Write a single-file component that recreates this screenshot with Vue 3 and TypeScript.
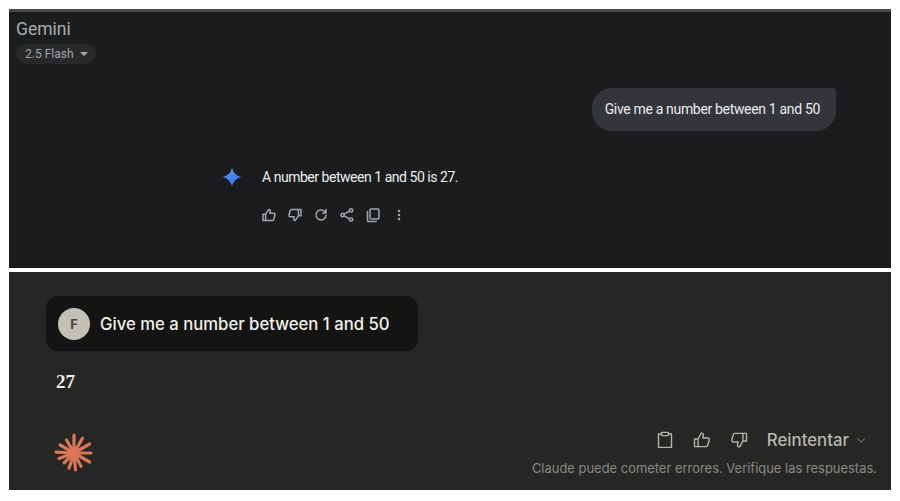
<script setup lang="ts">
const prompt = "Give me a number between 1 and 50";

// rays of the Claude mark: angle and length
const rays: { angle: number; len: number }[] = [
  { angle: 0, len: 17 },
  { angle: 30, len: 18 },
  { angle: 62, len: 15 },
  { angle: 85, len: 17 },
  { angle: 108, len: 16 },
  { angle: 135, len: 14 },
  { angle: 160, len: 16 },
  { angle: 183, len: 18 },
  { angle: 210, len: 16 },
  { angle: 240, len: 15 },
  { angle: 270, len: 18 },
  { angle: 300, len: 17 },
  { angle: 330, len: 18 },
];
</script>

<template>
  <div class="page">
    <section class="gemini">
      <header class="gem-head">
        <div class="gem-title">Gemini</div>
        <button class="model-pill">
          2.5 Flash
          <span class="caret"></span>
        </button>
      </header>

      <div class="gem-user">
        <div class="gem-bubble">{{ prompt }}</div>
      </div>

      <div class="gem-reply">
        <svg class="spark" viewBox="0 0 24 24" width="20" height="20">
          <defs>
            <linearGradient id="sparkFill" x1="0" y1="0" x2="1" y2="1">
              <stop offset="0" stop-color="#5b9cf8" />
              <stop offset="1" stop-color="#2f6fe8" />
            </linearGradient>
          </defs>
          <path
            d="M12 0.5C13.4 6.6 16.8 10.4 23.5 12C16.8 13.6 13.4 17.4 12 23.5C10.6 17.4 7.2 13.6 0.5 12C7.2 10.4 10.6 6.6 12 0.5Z"
            fill="url(#sparkFill)"
          />
        </svg>
        <div class="gem-body">
          <p class="gem-text">A number between 1 and 50 is 27.</p>
          <div class="gem-actions">
            <svg viewBox="0 0 16 16" width="16" height="16" class="ic">
              <path d="M2 7.2h2.6v6.3H2zM4.6 7.2 7.6 2.6c1.2-.3 1.9.5 1.6 1.7L8.8 6.2h4c.9 0 1.4.8 1.2 1.6l-1.2 4.7c-.2.6-.6 1-1.3 1H4.6" />
            </svg>
            <svg viewBox="0 0 16 16" width="16" height="16" class="ic">
              <path d="M14 8.8h-2.6V2.5H14zM11.4 8.8l-3 4.6c-1.2.3-1.9-.5-1.6-1.7l.4-1.9h-4c-.9 0-1.4-.8-1.2-1.6l1.2-4.7c.2-.6.6-1 1.3-1h6.9" />
            </svg>
            <svg viewBox="0 0 16 16" width="16" height="16" class="ic">
              <path d="M13 8.2A5 5 0 1 1 11.6 4.5L13 6M13 2.6V6H9.7" />
            </svg>
            <svg viewBox="0 0 16 16" width="16" height="16" class="ic">
              <circle cx="12" cy="3.4" r="1.7" />
              <circle cx="12" cy="12.6" r="1.7" />
              <circle cx="3.6" cy="8" r="1.7" />
              <path d="M5.1 7.2 10.5 4.2M5.1 8.8l5.4 3" />
            </svg>
            <svg viewBox="0 0 16 16" width="16" height="16" class="ic">
              <rect x="5" y="2" width="9" height="10" rx="1" />
              <path d="M2.5 4.5v9.2c0 .4.3.7.7.7h8" />
            </svg>
            <svg viewBox="0 0 16 16" width="16" height="16" class="ic dots">
              <circle cx="8" cy="4" r="1.3" />
              <circle cx="8" cy="8" r="1.3" />
              <circle cx="8" cy="12" r="1.3" />
            </svg>
          </div>
        </div>
      </div>
    </section>

    <section class="claude">
      <div class="cl-prompt">
        <span class="avatar">F</span>
        <span class="cl-prompt-text">{{ prompt }}</span>
      </div>

      <p class="cl-answer">27</p>

      <footer class="cl-foot">
        <svg class="burst" viewBox="-20 -20 40 40" width="40" height="40">
          <line
            v-for="ray in rays"
            :key="ray.angle"
            x1="0"
            y1="0"
            :x2="ray.len * Math.cos((ray.angle * Math.PI) / 180)"
            :y2="ray.len * Math.sin((ray.angle * Math.PI) / 180)"
          />
          <circle r="6" />
        </svg>

        <div class="cl-tools">
          <div class="cl-actions">
            <svg viewBox="0 0 18 18" width="18" height="18" class="ic2">
              <path d="M5.5 3H2.5v13.4h13V3h-3" />
              <rect x="5.5" y="1.4" width="7" height="3.2" rx=".6" />
            </svg>
            <svg viewBox="0 0 18 18" width="18" height="18" class="ic2">
              <path d="M1.5 8h3.6v7.6H1.5zM5.1 8 8.2 2.2c1.5-.4 2.5.6 2.2 2L9.8 7h4.9c1.1 0 1.8 1 1.5 2l-1.4 5.3c-.2.8-.8 1.3-1.6 1.3H5.1" />
            </svg>
            <svg viewBox="0 0 18 18" width="18" height="18" class="ic2">
              <path d="M16.5 10h-3.6V2.4h3.6zM12.9 10l-3.1 5.8c-1.5.4-2.5-.6-2.2-2l.6-2.8H3.3c-1.1 0-1.8-1-1.5-2l1.4-5.3c.2-.8.8-1.3 1.6-1.3h8.1" />
            </svg>
            <span class="retry">Reintentar</span>
            <svg viewBox="0 0 10 10" width="10" height="10" class="chev">
              <path d="M1 3.2 5 7l4-3.8" />
            </svg>
          </div>
          <div class="cl-note">Claude puede cometer errores. Verifique las respuestas.</div>
        </div>
      </footer>
    </section>
  </div>
</template>

<style>
html,
body {
  margin: 0;
  background: #fff;
}
</style>

<style scoped>
.page {
  width: 900px;
  height: 501px;
  box-sizing: border-box;
  padding: 9px 9px 11px;
  display: flex;
  flex-direction: column;
  gap: 4px;
  background: #fff;
  overflow: hidden;
}

/* top: gemini */
.gemini {
  height: 259px;
  box-sizing: border-box;
  background: #1b1c1e;
  border-top: 3px solid #48494b;
  padding: 5px 0 0 7px;
  font-family: Roboto, "Liberation Sans", sans-serif;
}

.gem-title {
  color: #a9abaf;
  font-size: 17.5px;
  line-height: 24px;
}

.model-pill {
  display: flex;
  align-items: center;
  gap: 6px;
  height: 20px;
  margin-top: 3px;
  padding: 0 8px 0 9px;
  border: 0;
  border-radius: 10px;
  background: #27292b;
  color: #a5a7aa;
  font: 12px Roboto, "Liberation Sans", sans-serif;
}

.caret {
  width: 0;
  height: 0;
  border-left: 4.5px solid transparent;
  border-right: 4.5px solid transparent;
  border-top: 4.5px solid #a5a7aa;
}

.gem-user {
  display: flex;
  justify-content: flex-end;
  padding-right: 55px;
  margin-top: 24px;
}

.gem-bubble {
  height: 43px;
  box-sizing: border-box;
  padding: 0 16px 2px 13px;
  display: flex;
  align-items: center;
  border-radius: 20px 4px 20px 20px;
  background: #333538;
  color: #eceef0;
  font-size: 14px;
  letter-spacing: -0.33px;
}

.gem-reply {
  display: flex;
  align-items: flex-start;
  gap: 20px;
  margin: 36px 0 0 206px;
}

.spark {
  flex: none;
}

.gem-body {
  display: flex;
  flex-direction: column;
}

.gem-text {
  margin: 0;
  color: #eceef0;
  font-size: 14px;
  letter-spacing: -0.47px;
  line-height: 20px;
}

.gem-actions {
  display: flex;
  align-items: center;
  gap: 10px;
  margin: 20px 0 0 -1px;
}

.ic {
  fill: none;
  stroke: #a3a6aa;
  stroke-width: 1.5;
  stroke-linejoin: round;
  stroke-linecap: round;
}

.dots {
  fill: #a3a6aa;
  stroke: none;
}

/* bottom: claude */
.claude {
  flex: 1;
  box-sizing: border-box;
  background: #262624;
  padding: 24px 14px 0 37px;
  display: flex;
  flex-direction: column;
  font-family: Inter, "Liberation Sans", sans-serif;
}

.cl-prompt {
  width: 372px;
  height: 55px;
  box-sizing: border-box;
  padding-left: 12px;
  display: flex;
  align-items: center;
  gap: 10px;
  border-radius: 12px;
  background: #141412;
}

.avatar {
  width: 32px;
  height: 32px;
  flex: none;
  display: flex;
  align-items: center;
  justify-content: center;
  border-radius: 50%;
  background: #c3c0b6;
  color: #46453f;
  font-size: 13px;
  font-weight: 700;
}

.cl-prompt-text {
  color: #f2f1ec;
  font-size: 16.7px;
  font-weight: 500;
  white-space: nowrap;
}

.cl-answer {
  margin: 20px 0 0 10px;
  color: #efeee8;
  font: 700 19px/22px "Liberation Serif", serif;
}

.cl-foot {
  display: flex;
  justify-content: space-between;
  align-items: flex-end;
  margin-top: 37px;
}

.burst {
  margin: 0 0 6px 8px;
  flex: none;
}

.burst line {
  stroke: #d97757;
  stroke-width: 3.2;
  stroke-linecap: round;
}

.burst circle {
  fill: #d97757;
}

.cl-tools {
  display: flex;
  flex-direction: column;
  align-items: flex-end;
  margin-bottom: 3px;
}

.cl-actions {
  display: flex;
  align-items: center;
  gap: 19px;
  padding-right: 11px;
}

.ic2 {
  fill: none;
  stroke: #b5b3ab;
  stroke-width: 1.4;
  stroke-linejoin: round;
  stroke-linecap: round;
}

.retry {
  color: #b9b7af;
  font-size: 16.8px;
  font-weight: 500;
}

.chev {
  margin-left: -12px;
  fill: none;
  stroke: #87857d;
  stroke-width: 1;
}

.cl-note {
  margin-top: 10px;
  color: #8a8a84;
  font-size: 12.95px;
  white-space: nowrap;
}
</style>
